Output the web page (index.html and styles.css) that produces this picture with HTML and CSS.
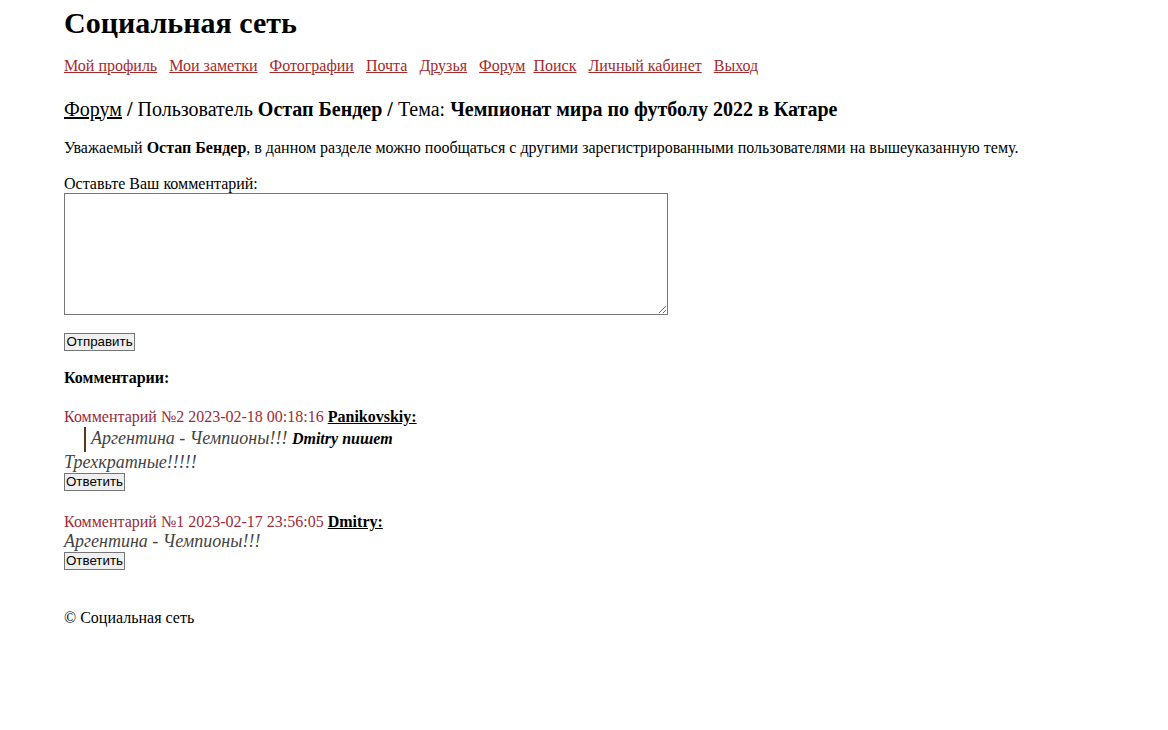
FILE: index.html
```html
<!DOCTYPE html>
<html lang="ru">
<head>
<meta charset="utf-8">
<title>Социальная сеть</title>
<link rel="stylesheet" href="styles.css">
</head>
<body>
<div class="page">
  <h1 class="site-title">Социальная сеть</h1>
  <nav class="menu">
    <a href="#">Мой профиль</a>
    <a href="#">Мои заметки</a>
    <a href="#">Фотографии</a>
    <a href="#">Почта</a>
    <a href="#">Друзья</a>
    <a href="#" class="tight">Форум</a>
    <a href="#">Поиск</a>
    <a href="#">Личный кабинет</a>
    <a href="#">Выход</a>
  </nav>
  <h3 class="crumbs"><a href="#" class="crumb-link">Форум</a> / <span class="thin">Пользователь</span> Остап Бендер / <span class="thin">Тема:</span> Чемпионат мира по футболу 2022 в Катаре</h3>
  <p class="intro">Уважаемый <b>Остап Бендер</b>, в данном разделе можно пообщаться с другими зарегистрированными пользователями на вышеуказанную тему.</p>
  <form class="form">
    <label class="label" for="c">Оставьте Ваш комментарий:</label>
    <textarea id="c" class="box"></textarea>
    <button type="button" class="btn send">Отправить</button>
  </form>
  <div class="comments-title">Комментарии:</div>
  <div class="comment">
    <div class="head">Комментарий №2 2023-02-18 00:18:16 <a href="#" class="author">Panikovskiy:</a></div>
    <div class="quote">Аргентина - Чемпионы!!! <b class="who">Dmitry пишет</b></div>
    <div class="text">Трехкратные!!!!!</div>
    <button type="button" class="btn">Ответить</button>
  </div>
  <div class="comment later">
    <div class="head">Комментарий №1 2023-02-17 23:56:05 <a href="#" class="author">Dmitry:</a></div>
    <div class="text">Аргентина - Чемпионы!!!</div>
    <button type="button" class="btn">Ответить</button>
  </div>
  <footer class="footer">© Социальная сеть</footer>
</div>
</body>
</html>
```
FILE: styles.css
```css
html, body {
  margin: 0;
  padding: 0;
  background: #fff;
}
body {
  font-family: "Liberation Serif", "Times New Roman", serif;
  font-size: 16px;
  color: #000;
}
.page {
  padding: 6px 64px 0 64px;
}
.site-title {
  margin: 0;
  font-size: 30px;
  font-weight: bold;
}
.menu {
  margin-top: 16.5px;
  display: flex;
  gap: 12px;
}
.menu a {
  color: #a52a2a;
}
.menu a.tight {
  margin-right: -4px;
}
.crumbs {
  margin: 23px 0 0 0;
  font-size: 20px;
  font-weight: bold;
}
.crumbs .thin {
  font-weight: normal;
}
.crumb-link {
  color: #000;
  font-weight: normal;
}
.intro {
  margin: 18px 0 0 0;
  font-size: 16px;
}
.form {
  margin-top: 17.6px;
  display: flex;
  flex-direction: column;
  align-items: flex-start;
}
.label {
  display: block;
  line-height: 19px;
}
.box {
  width: 604px;
  height: 122px;
  box-sizing: border-box;
  border: 1px solid #767676;
  margin: 0;
  padding: 2px;
}
.btn {
  font-family: "Liberation Sans", Arial, sans-serif;
  font-size: 13.33px;
  background: #efefef;
  border: 1px solid #767676;
  border-radius: 0;
  padding: 1px 1px;
  margin: 0;
  height: 18px;
  line-height: 14px;
  color: #000;
}
.send {
  margin-top: 18px;
  padding: 1px 1.5px;
}
.comments-title {
  margin-top: 18px;
  font-weight: bold;
}
.comment {
  margin-top: 21px;
  display: flex;
  flex-direction: column;
  align-items: flex-start;
}
.comment.later {
  margin-top: 22px;
}
.head {
  color: #9c2a3a;
}
.author {
  color: #000;
  font-weight: bold;
}
.quote {
  margin: 1px 0 0 20px;
  border-left: 2px solid #5a3a1a;
  padding: 1px 0 3px 5px;
  font-style: italic;
  font-size: 18px;
  color: #444;
}
.who {
  color: #000;
  font-size: 16px;
}
.text {
  font-style: italic;
  font-size: 18px;
  color: #444;
}
.footer {
  margin-top: 39px;
}
```
